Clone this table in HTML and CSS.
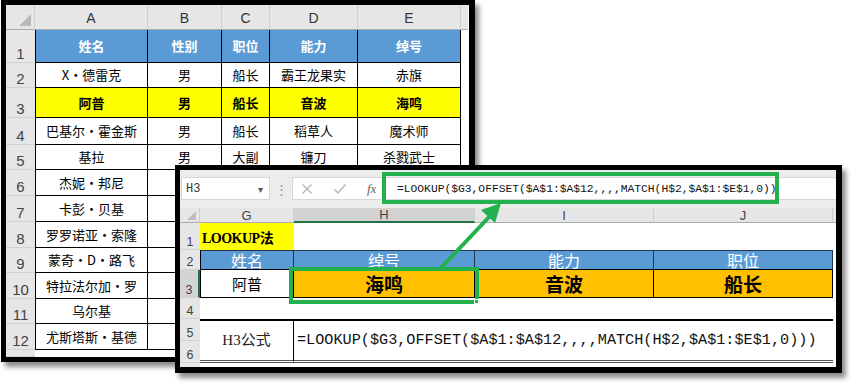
FILE: index.html
```html
<!DOCTYPE html>
<html lang="zh">
<head>
<meta charset="utf-8">
<title>LOOKUP</title>
<link rel="stylesheet" href="styles.css">
</head>
<body>
<div class="stage">
  <div class="win back">
    <div class="sheet1">
      <div class="corner"><span class="tri"></span></div>
      <div class="ch">A</div><div class="ch">B</div><div class="ch">C</div><div class="ch">D</div><div class="ch">E</div><div class="ch fill"></div>

      <div class="rh">1</div><div class="c first hd">姓名</div><div class="c hd">性别</div><div class="c hd">职位</div><div class="c hd">能力</div><div class="c hd">绰号</div><div class="fc"></div>
      <div class="rh">2</div><div class="c first">X・德雷克</div><div class="c">男</div><div class="c">船长</div><div class="c">霸王龙果实</div><div class="c">赤旗</div><div class="fc"></div>
      <div class="rh">3</div><div class="c first yl">阿普</div><div class="c yl">男</div><div class="c yl">船长</div><div class="c yl">音波</div><div class="c yl">海鸣</div><div class="fc"></div>
      <div class="rh">4</div><div class="c first">巴基尔・霍金斯</div><div class="c">男</div><div class="c">船长</div><div class="c">稻草人</div><div class="c">魔术师</div><div class="fc"></div>
      <div class="rh">5</div><div class="c first">基拉</div><div class="c">男</div><div class="c">大副</div><div class="c">镰刀</div><div class="c">杀戮武士</div><div class="fc"></div>
      <div class="rh">6</div><div class="c first">杰妮・邦尼</div><div class="c">女</div><div class="c">船长</div><div class="c">年龄果实</div><div class="c">大食</div><div class="fc"></div>
      <div class="rh">7</div><div class="c first">卡彭・贝基</div><div class="c">男</div><div class="c">船长</div><div class="c">城堡果实</div><div class="c">大黑帮</div><div class="fc"></div>
      <div class="rh">8</div><div class="c first">罗罗诺亚・索隆</div><div class="c">男</div><div class="c">剑士</div><div class="c">三刀流</div><div class="c">海贼猎人</div><div class="fc"></div>
      <div class="rh">9</div><div class="c first">蒙奇・D・路飞</div><div class="c">男</div><div class="c">船长</div><div class="c">橡胶果实</div><div class="c">草帽</div><div class="fc"></div>
      <div class="rh">10</div><div class="c first">特拉法尔加・罗</div><div class="c">男</div><div class="c">船长</div><div class="c">手术果实</div><div class="c">死亡外科医生</div><div class="fc"></div>
      <div class="rh">11</div><div class="c first">乌尔基</div><div class="c">男</div><div class="c">船长</div><div class="c">吸收</div><div class="c">怪僧</div><div class="fc"></div>
      <div class="rh">12</div><div class="c first">尤斯塔斯・基德</div><div class="c">男</div><div class="c">船长</div><div class="c">磁力果实</div><div class="c">船长</div><div class="fc"></div>
      <div class="rh"></div><div class="tail"></div>
    </div>
  </div>

  <div class="win front">
    <div class="fbar">
      <div class="namebox"><span class="nb-text">H3</span><span class="nb-arrow">▾</span></div>
      <div class="grip">⋮</div>
      <div class="finput">
        <div class="ficons">
          <svg class="ico" width="12" height="12" viewBox="0 0 12 12"><path d="M1.5 1.5 L10.5 10.5 M10.5 1.5 L1.5 10.5" stroke="#b4b4b4" stroke-width="1.3" fill="none"/></svg>
          <svg class="ico" width="14" height="12" viewBox="0 0 14 12"><path d="M1.5 6.5 L5 10 L12.5 1.5" stroke="#b4b4b4" stroke-width="1.4" fill="none"/></svg>
          <span class="fx">fx</span>
        </div>
        <div class="ftext">=LOOKUP($G3,OFFSET($A$1:$A$12,,,,MATCH(H$2,$A$1:$E$1,0))</div>
      </div>
    </div>
    <div class="sheet2">
      <div class="corner2"><span class="tri2"></span></div>
      <div class="ch2">G</div><div class="ch2 sel">H</div><div class="ch2">I</div><div class="ch2">J</div><div class="ch2 fill"></div>

      <div class="rh2">1</div><div class="d2 title">LOOKUP法</div><div class="d2"></div><div class="d2"></div><div class="d2"></div><div class="d2"></div>
      <div class="rh2">2</div><div class="d2 h2 left">姓名</div><div class="d2 h2">绰号</div><div class="d2 h2">能力</div><div class="d2 h2">职位</div><div class="d2"></div>
      <div class="rh2 sel">3</div><div class="d2 r3 left">阿普</div><div class="d2 r3 or">海鸣</div><div class="d2 r3 or">音波</div><div class="d2 r3 or">船长</div><div class="d2"></div>
      <div class="rh2">4</div><div class="d2"></div><div class="d2"></div><div class="d2"></div><div class="d2"></div><div class="d2"></div>
      <div class="rh2">5</div><div class="d2 lbl">H3公式</div><div class="d2 fml">=LOOKUP($G3,OFFSET($A$1:$A$12,,,,MATCH(H$2,$A$1:$E$1,0)))</div><div class="d2 fill2"></div>
      <div class="rh2">6</div>
      <div class="rh2 last"></div><div class="tail2"></div>
    </div>
    <div class="selbox"><span class="handle"></span></div>
    <div class="fbox"></div>
  </div>

  <svg class="arrow" width="852" height="384" viewBox="0 0 852 384">
    <line x1="440" y1="269" x2="490" y2="216" stroke="#22b14c" stroke-width="4"/>
    <polygon points="501,203 495,223 481,210" fill="#22b14c"/>
  </svg>
</div>
</body>
</html>
```

FILE: styles.css
```css
* { box-sizing: border-box; }
html, body { margin: 0; padding: 0; }
body {
  background: #fff;
  font-family: "Noto Sans CJK SC", "Liberation Sans", sans-serif;
  color: #000;
}
.stage {
  position: relative;
  width: 852px;
  height: 384px;
  overflow: hidden;
  padding-left: 1px;
}
.win {
  background: #fff;
  border: 5px solid #000;
  border-right-width: 6px;
  box-shadow: 4px 5px 5px rgba(0, 0, 0, 0.45);
}
.back {
  width: 474px;
  height: 362px;
}

/* ---------- back sheet ---------- */
.sheet1 {
  display: grid;
  grid-template-columns: 29px 113px 74px 48px 88px 103px 7px;
  grid-template-rows: 25px 33px 25px 30px 27px 25px 26px 26px 26px 25px 26px 25px 26px 7px;
  font-size: 13px;
}
.corner {
  position: relative;
  background: #e6e6e6;
  border-right: 1px solid #cfcfcf;
  border-bottom: 1px solid #ababab;
}
.tri {
  position: absolute;
  right: 3px;
  bottom: 3px;
  width: 12px;
  height: 12px;
  background: #b9b9b9;
  clip-path: polygon(100% 0, 100% 100%, 0 100%);
}
.ch {
  background: #e6e6e6;
  border-right: 1px solid #cfcfcf;
  border-bottom: 1px solid #ababab;
  font-family: "Liberation Sans", sans-serif;
  font-size: 14px;
  color: #333;
  display: flex;
  align-items: center;
  justify-content: center;
  padding-top: 1px;
}
.ch.fill { border-right: none; }
.rh {
  background: #e6e6e6;
  border-bottom: 1px solid #d2d2d2;
  font-family: "Liberation Sans", sans-serif;
  font-size: 15px;
  color: #444;
  display: flex;
  align-items: flex-end;
  justify-content: center;
  padding-bottom: 1px;
  line-height: 1;
}
.c {
  border-right: 1px solid #000;
  border-bottom: 1px solid #000;
  display: flex;
  align-items: center;
  justify-content: center;
  white-space: nowrap;
  overflow: hidden;
  background: #fff;
  line-height: 1.2;
}
.c.first { border-left: 1px solid #000; }
.c.hd { background: #5b9bd5; color: #fff; font-weight: 700; }
.c.yl { background: #ffff00; font-weight: 700; }
.fc { background: #fff; }
.tail { grid-column: 2 / span 6; background: #fff; }

/* ---------- front window ---------- */
.front {
  position: absolute;
  left: 175px;
  top: 165px;
  width: 667px;
  height: 208px;
  border-bottom-width: 6px;
  z-index: 2;
}
.fbar {
  height: 38px;
  background: #ececec;
  display: flex;
  align-items: flex-start;
  padding-top: 7px;
  padding-left: 1px;
}
.namebox {
  width: 89px;
  height: 23px;
  background: #fff;
  border: 1px solid #d6d6d6;
  display: flex;
  align-items: center;
  justify-content: space-between;
  padding: 0 6px 0 4px;
}
.nb-text {
  font-family: "Liberation Mono", monospace;
  font-size: 12px;
  color: #333;
}
.nb-arrow { font-size: 10px; color: #555; }
.grip {
  width: 22px;
  text-align: center;
  color: #9a9a9a;
  font-size: 13px;
  line-height: 23px;
}
.finput {
  flex: 1;
  height: 23px;
  background: #fff;
  border: 1px solid #d6d6d6;
  border-right: none;
  display: flex;
  align-items: center;
}
.ficons {
  width: 90px;
  display: flex;
  align-items: center;
  gap: 20px;
  padding-left: 8px;
}
.fx {
  font-family: "Liberation Serif", serif;
  font-style: italic;
  font-size: 13px;
  color: #666;
}
.ftext {
  padding-left: 14px;
  font-family: "Liberation Mono", monospace;
  font-size: 11.3px;
  color: #111;
  white-space: nowrap;
}

.sheet2 {
  display: grid;
  grid-template-columns: 20px 94px 181px 179px 179px 3px;
  grid-template-rows: 15px 27px 20px 28px 21px 22px 22px 4px;
}
.corner2 {
  position: relative;
  background: #e6e6e6;
  border-bottom: 1px solid #ababab;
  border-right: 1px solid #cfcfcf;
}
.tri2 {
  position: absolute;
  right: 3px;
  bottom: 2px;
  width: 9px;
  height: 9px;
  background: #bdbdbd;
  clip-path: polygon(100% 0, 100% 100%, 0 100%);
}
.ch2 {
  background: #e6e6e6;
  border-right: 1px solid #cfcfcf;
  border-bottom: 1px solid #ababab;
  font-family: "Liberation Sans", sans-serif;
  font-size: 13px;
  color: #444;
  display: flex;
  align-items: center;
  justify-content: center;
  line-height: 1;
}
.ch2.sel { background: #d3d3d3; border-bottom: 2px solid #217346; }
.ch2.fill { border-right: none; }
.rh2 {
  background: #e6e6e6;
  border-bottom: 1px solid #d2d2d2;
  font-family: "Liberation Sans", sans-serif;
  font-size: 12.5px;
  color: #444;
  display: flex;
  align-items: flex-end;
  justify-content: center;
  padding-bottom: 1px;
  line-height: 1;
}
.rh2.sel { background: #d3d3d3; border-right: 2px solid #217346; }
.rh2.last { border-bottom: none; }
.d2 {
  background: #fff;
  display: flex;
  align-items: center;
  justify-content: center;
  white-space: nowrap;
  overflow: hidden;
  line-height: 1;
}
.title {
  background: #ffff00;
  justify-content: flex-start;
  padding-left: 2px;
  padding-top: 4px;
  font-family: "Liberation Serif", "Noto Sans CJK SC", serif;
  font-weight: 700;
  font-size: 14px;
  letter-spacing: -0.5px;
}
.h2 {
  background: #5b9bd5;
  color: #fff;
  font-size: 16px;
  border-top: 1px solid #1f3850;
  border-right: 1px solid #1f3850;
  border-bottom: 1px solid #000;
}
.left { border-left: 1px solid #000; }
.r3 {
  font-size: 15px;
  border-right: 1px solid #000;
  border-bottom: 1px solid #000;
}
.r3.or {
  background: #ffc000;
  font-size: 19px;
  font-weight: 700;
}
.lbl {
  grid-row: span 2;
  font-size: 15px;
  font-family: "Liberation Serif", "Noto Sans CJK SC", serif;
  border-top: 2px solid #000;
  border-right: 1px solid #000;
  border-bottom: 3px double #555;
  color: #222;
}
.fml {
  grid-column: span 3;
  grid-row: span 2;
  justify-content: flex-start;
  padding-left: 3px;
  font-family: "Liberation Mono", monospace;
  font-size: 15.2px;
  color: #111;
  border-top: 2px solid #000;
  border-bottom: 3px double #555;
}
.fill2 { grid-row: span 2; }
.tail2 { grid-column: 2 / span 5; background: #fff; }

.selbox {
  position: absolute;
  left: 109px;
  top: 97px;
  width: 190px;
  height: 37px;
  border: 4px solid #22b14c;
}
.handle {
  position: absolute;
  right: -4px;
  bottom: -4px;
  width: 5px;
  height: 5px;
  background: #22b14c;
  border: 1px solid #fff;
}
.fbox {
  position: absolute;
  left: 202px;
  top: 2px;
  width: 397px;
  height: 32px;
  border: 4px solid #22b14c;
}
.arrow {
  position: absolute;
  left: 0;
  top: 0;
  z-index: 3;
  pointer-events: none;
}
```
